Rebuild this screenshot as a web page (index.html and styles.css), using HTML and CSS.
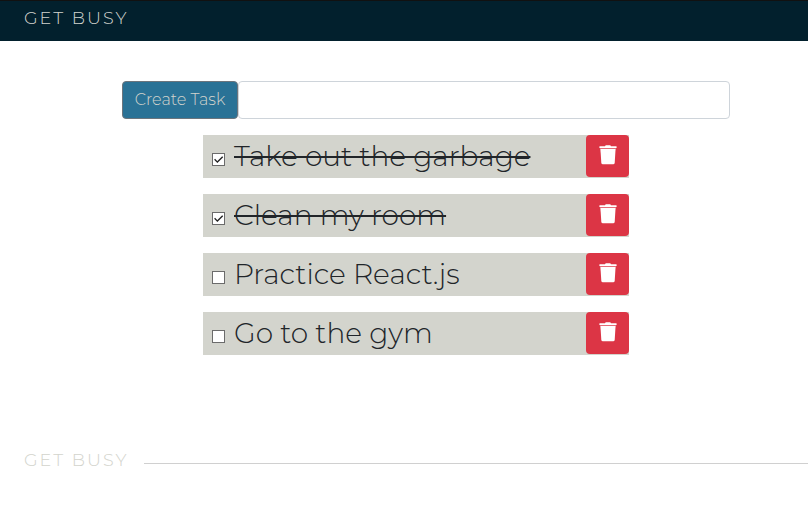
FILE: index.html
```html
<!DOCTYPE html>
<html lang="en">
<head>
<meta charset="utf-8">
<title>Get Busy</title>
<link rel="stylesheet" href="styles.css">
</head>
<body>
<svg class="defs" aria-hidden="true">
  <symbol id="trash" viewBox="0 0 18 20">
    <path d="M6 1.2Q6.3.2 7.1.2h3.8q.8 0 1.1 1h5.2q.4 0 .4.4v1.5H.4V1.6q0-.4.4-.4z"/>
    <path opacity=".3" d="M.9 3.1h16.2V4H.9z"/>
    <path d="M1.4 4h15.2l-.9 13.7q-.1 1.5-1.6 1.5H3.9q-1.5 0-1.6-1.5z"/>
  </symbol>
  <symbol id="check" viewBox="0 0 13 13">
    <path d="M2.6 6.2l2.8 2.9L10.7 3.8" fill="none" stroke="#222" stroke-width="1.35"/>
  </symbol>
</svg>
<header class="header"><span class="brand">GET BUSY</span></header>
<main class="main">
  <form class="create">
    <button class="create-button" type="button">Create Task</button>
    <input class="create-input" type="text" aria-label="Task">
  </form>
  <ul class="tasks">
    <li class="task">
      <span class="box"><svg><use href="#check"/></svg></span>
      <span class="title done">Take out the garbage</span>
      <button class="delete"><svg><use href="#trash"/></svg></button>
    </li>
    <li class="task">
      <span class="box"><svg><use href="#check"/></svg></span>
      <span class="title done">Clean my room</span>
      <button class="delete"><svg><use href="#trash"/></svg></button>
    </li>
    <li class="task">
      <span class="box"></span>
      <span class="title">Practice React.js</span>
      <button class="delete"><svg><use href="#trash"/></svg></button>
    </li>
    <li class="task">
      <span class="box"></span>
      <span class="title">Go to the gym</span>
      <button class="delete"><svg><use href="#trash"/></svg></button>
    </li>
  </ul>
</main>
<footer class="footer"><span class="brand">GET BUSY</span><span class="rule"></span></footer>
</body>
</html>
```
FILE: styles.css
```css
* { box-sizing: border-box; }
body {
  margin: 0;
  background: #fff;
  color: #212529;
  font: 300 16px/24px Montserrat, Inter, "Open Sans", sans-serif;
  overflow: hidden;
}
.defs { display: none; }
.header {
  height: 41px;
  padding: 5px 24px 0;
  border-top: 1px solid #111;
  background: #02202d;
  color: #d3d4cd;
}
.brand { width: 104px; font-size: 17.6px; letter-spacing: 2px; white-space: nowrap; }
.main { padding-top: 40px; }
.create { display: flex; width: 608px; margin: 0 0 16px 122px; }
.create-button {
  width: 116px;
  height: 38px;
  padding: 0 0 1px;
  border: 1px solid #6c757d;
  border-radius: 4px;
  background: #2a7296;
  color: #d3d4cd;
  font: inherit;
}
.create-input {
  flex: 1;
  height: 38px;
  border: 1px solid #ced4da;
  border-radius: 4px;
  background: #fff;
}
.tasks {
  display: grid;
  gap: 16px;
  width: 426px;
  margin: 0 0 0 203px;
  padding: 0;
  list-style: none;
}
.task { display: flex; height: 43px; padding-left: 9px; background: #d3d4cd; }
.box {
  display: flex;
  width: 13px;
  height: 13px;
  margin: 18px 9px 0 0;
  border: 1px solid #6b6b6b;
  background: #fff;
}
.box svg { flex: none; width: 13px; height: 13px; margin: -1px; }
.title { flex: none; font-size: 28px; font-weight: 300; line-height: 43px; white-space: nowrap; }
.done { text-decoration: line-through; text-decoration-thickness: 2px; }
.delete {
  display: flex;
  justify-content: center;
  width: 43px;
  height: 42px;
  margin-left: auto;
  padding: 10px 0 0;
  border: 0;
  border-radius: 4px;
  background: #dc3545;
  color: #fff;
}
.delete svg { width: 18px; height: 20px; fill: currentColor; }
.footer { display: flex; padding: 93px 0 0 24px; color: #d3d4cd; }
.rule { flex: 1; height: 1px; margin: 15px 0 0 16px; background: #d0d0d0; }
```
